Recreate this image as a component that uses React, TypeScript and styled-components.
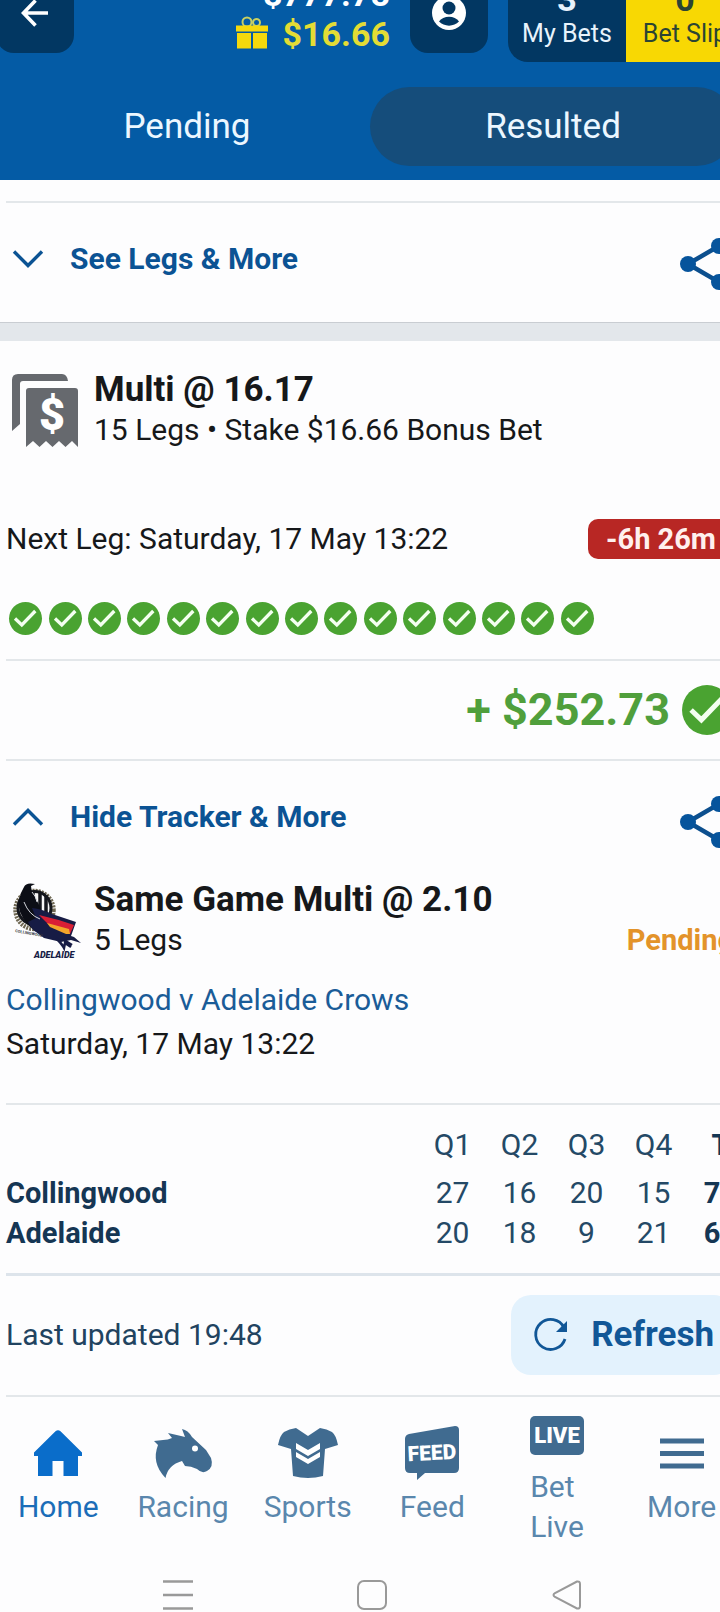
import React from "react";
import styled, { createGlobalStyle, css } from "styled-components";

const GlobalStyle = createGlobalStyle`
  *, *::before, *::after { box-sizing: border-box; }
  html, body { margin: 0; background: #fdfdfe; }
  body {
    font-family: Roboto, "Liberation Sans", sans-serif;
    font-size: 30px;
    line-height: 40px;
    color: #16181a;
  }
  h2, p, ul { margin: 0; padding: 0; }
  ul { list-style: none; }
  a { color: inherit; text-decoration: none; }
  button { font: inherit; color: inherit; border: 0; padding: 0; background: none; cursor: pointer; }
  svg { display: block; flex: none; overflow: visible; }
`;

/* The page is wider and taller than the window, so the edges are cut off. */
const Viewport = styled.div`
  overflow: hidden;
`;

const Page = styled.div`
  margin: -36px -24px 0 -4px;
`;

const Header = styled.header`
  background: #045ba5;
  color: #fff;
  padding-bottom: 14px;
`;

const TopBar = styled.div`
  display: flex;
  align-items: center;
  height: 98px;
`;

const SquareButton = styled.button`
  display: flex;
  align-items: center;
  justify-content: center;
  width: 78px;
  height: 80px;
  border-radius: 18px;
  background: #023762;
`;

const Balance = styled.div`
  flex: 1;
  display: flex;
  flex-direction: column;
  align-items: flex-end;
  padding: 2px 20px 0 0;
  font-size: 34px;
  font-weight: 700;
`;

const BonusBalance = styled.span`
  display: flex;
  align-items: center;
  gap: 14px;
  color: #e3dc35;
`;

const BetCounters = styled.div`
  display: flex;
  align-self: stretch;
  width: 236px;
  margin-left: 20px;
  border-radius: 20px;
  overflow: hidden;
`;

const Counter = styled.button<{ $slip?: boolean }>`
  flex: 1;
  display: flex;
  flex-direction: column;
  align-items: center;
  justify-content: flex-end;
  padding-bottom: 8px;
  font-size: 25px;
  line-height: 40px;
  white-space: nowrap;
  background: ${(p) => (p.$slip ? "#f8d803" : "#023762")};
  color: ${(p) => (p.$slip ? "#2b4434" : "#e8f3fc")};
  strong {
    line-height: 30px;
    font-size: 34px;
    font-weight: 700;
  }
`;

const Tabs = styled.div`
  display: flex;
  padding: 0 8px;
  margin-top: 25px;
`;

const Tab = styled.button<{ $active?: boolean }>`
  flex: 1;
  height: 79px;
  border-radius: 40px;
  font-size: 35px;
  color: #ecf7ff;
  background: ${(p) => (p.$active ? "#154d7b" : "transparent")};
`;

const Divider = styled.hr<{ $thick?: boolean }>`
  height: ${(p) => (p.$thick ? 3 : 2)}px;
  margin: 0;
  border: 0;
  background: ${(p) => (p.$thick ? "#dde4eb" : "#e3e7ea")};
`;

const PreviousBet = styled.section`
  padding: 21px 10px 0;
`;

const BetCard = styled.section`
  padding: 29px 10px 0;
`;

const Gap = styled.div`
  height: 19px;
  background: #e3e7eb;
  border-top: 1px solid #c9cdd2;
`;

const ExpandRow = styled.div`
  display: flex;
  justify-content: space-between;
  align-items: flex-start;
  height: 119px;
  padding: 35px 2px 0 7px;
`;

const ExpandButton = styled.button`
  display: flex;
  align-items: center;
  gap: 27px;
  height: 42px;
  font-weight: 700;
  color: #0b5394;
`;

const CardHead = styled.div`
  display: flex;
  align-items: flex-end;
  height: 80px;
  svg { align-self: flex-start; margin: 2px 14px 0 6px; }
`;

const CardTitles = styled.div`
  flex: 1;
`;

const Title = styled.h2`
  font-size: 35px;
  line-height: 40px;
  font-weight: 700;
`;

const Status = styled.span`
  font-size: 29px;
  font-weight: 700;
  color: #e3932a;
`;

const NextLeg = styled.div`
  display: flex;
  justify-content: space-between;
  margin-top: 69px;
`;

const Countdown = styled.span`
  padding: 0 18px;
  border-radius: 10px;
  background: #b82724;
  color: #fff0ee;
  font-size: 29px;
  font-weight: 700;
`;

const LegTicks = styled.ul`
  display: grid;
  grid-template-columns: repeat(15, 1fr);
  justify-items: center;
  max-width: 591px;
  margin: 43px 0 24px;
`;

const Returns = styled.div`
  display: flex;
  align-items: center;
  justify-content: flex-end;
  gap: 12px;
  height: 98px;
  padding-right: 2px;
  font-size: 45px;
  font-weight: 700;
  color: #509f3c;
`;

const MatchInfo = styled.div`
  margin: 18px 0 37px;
  line-height: 44px;
  a { color: #1a5c98; }
`;

const ScoreTable = styled.table`
  width: calc(100% + 20px);
  table-layout: fixed;
  border-collapse: collapse;
  margin: 20px 0;
  color: #244966;
  th, td { padding: 0; width: 67px; text-align: center; font-weight: 400; }
  thead th { padding-bottom: 8px; }
  th:first-child, td:first-child { width: auto; text-align: left; }
  tbody th, th:last-child, td:last-child { font-size: 29px; font-weight: 700; color: #153654; }
`;

const UpdatedRow = styled.div`
  display: flex;
  align-items: center;
  justify-content: space-between;
  padding: 19px 0 20px;
  color: #214360;
`;

const RefreshButton = styled.button`
  display: flex;
  align-items: center;
  gap: 22px;
  height: 80px;
  padding: 0 20px 0 22px;
  border-radius: 20px;
  background: #e3f2fd;
  color: #115797;
  font-size: 35px;
  font-weight: 700;
`;

const BottomNav = styled.nav`
  display: grid;
  grid-template-columns: repeat(6, 1fr);
  height: 162px;
`;

const NavItem = styled.a<{ $active?: boolean }>`
  display: flex;
  flex-direction: column;
  align-items: center;
  justify-content: center;
  gap: 10px;
  color: #5a87ad;
  ${(p) => p.$active && css`color: #1b6db8;`}
  span { width: min-content; }
`;

const SystemBar = styled.div`
  display: flex;
  justify-content: space-around;
  padding: 21px 80px 2px 85px;
`;

const BackIcon = () => (
  <svg width="28" height="28" viewBox="0 0 28 28" fill="none" stroke="#fff" strokeWidth="3.6">
    <path d="M27 14H3M14.500 1.500 2.500 14l12 12.500" />
  </svg>
);

const UserIcon = () => (
  <svg width="34" height="34" viewBox="0 0 34 34">
    <circle cx="17" cy="17" r="17" fill="#fff" />
    <circle cx="17" cy="12" r="6.500" fill="#023762" />
    <path d="M7 25.500c4-6.500 16-6.500 20 0-5 5.500-15 5.500-20 0z" fill="#023762" />
  </svg>
);

const GiftIcon = () => (
  <svg width="34" height="34" viewBox="0 0 34 34">
    <g fill="none" stroke="#c9d060" strokeWidth="2">
      <circle cx="12" cy="5" r="4.500" />
      <circle cx="21.500" cy="5.500" r="3.500" />
    </g>
    <path d="M1 8.500h32v6H1zM2 16h14v15.500H2zM18 16h14v15.500H18z" fill="#f5d90c" />
  </svg>
);

const Chevron = ({ up }: { up?: boolean }) => (
  <svg width="30" height="18" viewBox="0 0 30 18" fill="none" stroke="#0b5394" strokeWidth="3.400">
    <path d={up ? "M1 16.500 15 2.500l14 14" : "M1 1.500l14 14 14-14"} />
  </svg>
);

const ShareIcon = () => (
  <svg width="52" height="52" viewBox="0 0 52 52" fill="#06549c">
    <path d="M8 26 39 8M8 26l31 18" stroke="#0c4f8e" strokeWidth="4.500" />
    <circle cx="8" cy="26" r="8" />
    <circle cx="39" cy="8" r="8" />
    <circle cx="39" cy="44" r="8" />
  </svg>
);

const Tick = ({ size }: { size: number }) => (
  <svg width={size} height={size} viewBox="0 0 33 33" role="img" aria-label="Won">
    <circle cx="16.500" cy="16.500" r="16.500" fill="#4aa331" />
    <path d="M6 16.500l6.800 6.500L26.300 9" fill="none" stroke="#f4fff0" strokeWidth="3.300" />
  </svg>
);

const MultiIcon = () => (
  <svg width="68" height="76" viewBox="0 0 68 76" fill="#66696e">
    <path d="M0 59V8q0-6 6-6h44q5 0 6 7H11q-3 0-3 3v40z" />
    <path d="M14 75V19q0-3 3-3h46q3 0 3 3v56l-6-6-6.500 6-6.500-6-6.500 6-6.500-6-6.500 6-6.500-6z" />
    <text x="40" y="58" textAnchor="middle" fontFamily="Roboto" fontSize="45" fontWeight="900" fill="#fff">$</text>
  </svg>
);

const TeamLogo = () => (
  <svg width="68" height="78" viewBox="0 0 68 78">
    <circle cx="22.500" cy="28" r="19" fill="#fff" stroke="#6f6853" strokeWidth="4.500" strokeDasharray="2 1" />
    <circle cx="22.500" cy="26" r="16.500" fill="#f7f7f7" stroke="#14161c" strokeWidth="3" />
    <path d="M21 10v32M28 10v30M34 13v22" stroke="#14161c" strokeWidth="3.500" />
    <path d="M12 5Q14 0 23 2l-4 2 1 7q5 6 9 17l-6 20Q14 44 8 30 4 18 12 5z" fill="#0c0e16" />
    <path d="M20 26Q30 27 40 32l24 8-5 14 3 1 7 6-10-3-10 2-17-4-8-6Q20 48 16 40l8-4z" fill="#171c45" />
    <path d="M27 33q18 4 35 10l-4 9-20-8z" fill="#d91f35" />
    <path d="M35 41l22 6 1 5-4 0-16-7z" fill="#f3a52a" />
    <path d="M12 20q5 13 16 17M20 10q4 4 5 10" fill="none" stroke="#d5d8de" strokeWidth="1" />
    <path d="M44 56q6 6 8 10l1-5 6 4M52 58l8 5" fill="none" stroke="#171c45" strokeWidth="2.500" />
    <text x="3" y="50" fontFamily="Roboto" fontSize="4" fontWeight="700" fill="#33333a" transform="rotate(10 3 50)">COLLINGWOOD</text>
    <text x="22" y="76" fontFamily="Roboto" fontSize="9" fontWeight="900" fontStyle="italic" fill="#171c45">ADELAIDE</text>
  </svg>
);

const RefreshIcon = () => (
  <svg width="36" height="36" viewBox="0 0 36 36" fill="none" stroke="#115797" strokeWidth="2.800">
    <path d="M31 10.500A15 15 0 1 0 32 22" />
    <path d="M34 4v11H23z" fill="#115797" stroke="none" />
  </svg>
);

const HomeIcon = () => (
  <svg width="50" height="48" viewBox="0 0 50 48" fill="#0a6dca">
    <path d="M22.500 2.200q2.500-2 5 0L49 23.500V27h-4v20H30.500V32h-11v15H5V27H1v-3.500z" />
  </svg>
);

const HorseIcon = () => (
  <svg width="60" height="48" viewBox="0 1 60 48" fill="#406b90">
    <path d="M12.500 50Q-2 35 5 17L1 13l9-1q5 0 9-2l-4-5 13 3 4 1-3-8q6 1 10 8l14 13 5 8q3 9-4 13-5 3-10-2-6-3-12-3l-3-5Q15 37 12.500 50z" />
    <circle cx="42" cy="20.500" r="3" fill="#fff" />
  </svg>
);

const ShirtIcon = () => (
  <svg width="60" height="48" viewBox="0 1 60 48" fill="#406b90">
    <path d="M18 0l12 8L42 0q7 1 12 4 4 3 6 13l-13 4-2 27q-15 4-30 0l-2-27-13-4Q2 7 6 4q5-3 12-4z" />
    <path d="M18 15l12 7 12-7v6l-12 7-12-7zM18 24l12 7 12-7v5l-12 7-12-7z" fill="#fff" />
  </svg>
);

const FeedIcon = () => (
  <svg width="54" height="48" viewBox="0 3 54 48" fill="#406b90">
    <path d="M0 13q0-4 4-5L50 0q4 0 4 4v38q0 5-5 5H20l-8 7v-7H5q-5 0-5-5z" />
    <text x="27" y="34" textAnchor="middle" fontFamily="Roboto" fontSize="21" fontWeight="900" fill="#fff" transform="rotate(-3 27 30)">FEED</text>
  </svg>
);

const LiveIcon = () => (
  <svg width="54" height="48" viewBox="0 0 54 48">
    <rect y="7" width="54" height="39" rx="5" fill="#406b90" />
    <text x="27" y="34" textAnchor="middle" fontFamily="Roboto" fontSize="22" fontWeight="900" fill="#fff">LIVE</text>
  </svg>
);

const MenuIcon = () => (
  <svg width="44" height="48" viewBox="0 0 44 48" stroke="#406b90" strokeWidth="5">
    <path d="M0 12h44M0 24.500h44M0 37h44" />
  </svg>
);

const navItems = [
  { label: "Home", Icon: HomeIcon, active: true },
  { label: "Racing", Icon: HorseIcon },
  { label: "Sports", Icon: ShirtIcon },
  { label: "Feed", Icon: FeedIcon },
  { label: "Bet Live", Icon: LiveIcon },
  { label: "More", Icon: MenuIcon },
];

const scores = [
  { team: "Collingwood", quarters: [27, 16, 20, 15], total: 78 },
  { team: "Adelaide", quarters: [20, 18, 9, 21], total: 68 },
];

function Expander({ label, open }: { label: string; open?: boolean }) {
  return (
    <ExpandRow>
      <ExpandButton aria-expanded={!!open}>
        <Chevron up={open} />
        {label}
      </ExpandButton>
      <button aria-label="Share">
        <ShareIcon />
      </button>
    </ExpandRow>
  );
}

export default function App() {
  return (
    <Viewport>
      <GlobalStyle />
      <Page>
        <Header>
          <TopBar>
            <SquareButton aria-label="Back"><BackIcon /></SquareButton>
            <Balance>
              <span>$777.78</span>
              <BonusBalance><GiftIcon />$16.66</BonusBalance>
            </Balance>
            <SquareButton aria-label="Account"><UserIcon /></SquareButton>
            <BetCounters>
              <Counter><strong>3</strong>My Bets</Counter>
              <Counter $slip><strong>0</strong>Bet Slip</Counter>
            </BetCounters>
          </TopBar>
          <Tabs role="tablist">
            <Tab role="tab" aria-selected={false}>Pending</Tab>
            <Tab role="tab" aria-selected $active>Resulted</Tab>
          </Tabs>
        </Header>

        <main>
          <PreviousBet>
            <Divider />
            <Expander label="See Legs &amp; More" />
          </PreviousBet>
          <Gap />
          <BetCard>
            <CardHead>
              <MultiIcon />
              <CardTitles>
                <Title>Multi @ 16.17</Title>
                <p>15 Legs • Stake $16.66 Bonus Bet</p>
              </CardTitles>
            </CardHead>
            <NextLeg>
              <span>Next Leg: Saturday, 17 May 13:22</span>
              <Countdown>-6h 26m</Countdown>
            </NextLeg>
            <LegTicks>
              {Array.from({ length: 15 }, (_, i) => (
                <li key={i}><Tick size={33} /></li>
              ))}
            </LegTicks>
            <Divider />
            <Returns>
              + $252.73
              <Tick size={50} />
            </Returns>
            <Divider />
            <Expander label="Hide Tracker &amp; More" open />
            <CardHead>
              <TeamLogo />
              <CardTitles>
                <Title>Same Game Multi @ 2.10</Title>
                <p>5 Legs</p>
              </CardTitles>
              <Status>Pending</Status>
            </CardHead>
            <MatchInfo>
              <a href="#match">Collingwood v Adelaide Crows</a>
              <p>Saturday, 17 May 13:22</p>
            </MatchInfo>
            <Divider />
            <ScoreTable>
              <thead>
                <tr>
                  <td />
                  {["Q1", "Q2", "Q3", "Q4", "T"].map((q) => (
                    <th key={q} scope="col">{q}</th>
                  ))}
                </tr>
              </thead>
              <tbody>
                {scores.map((s) => (
                  <tr key={s.team}>
                    <th scope="row">{s.team}</th>
                    {s.quarters.map((n, i) => <td key={i}>{n}</td>)}
                    <td>{s.total}</td>
                  </tr>
                ))}
              </tbody>
            </ScoreTable>
            <Divider $thick />
            <UpdatedRow>
              <span>Last updated 19:48</span>
              <RefreshButton><RefreshIcon />Refresh</RefreshButton>
            </UpdatedRow>
            <Divider />
          </BetCard>
        </main>

        <BottomNav>
          {navItems.map(({ label, Icon, active }) => (
            <NavItem key={label} href={"#" + label.toLowerCase().replace(" ", "-")} $active={active}>
              <Icon />
              <span>{label}</span>
            </NavItem>
          ))}
        </BottomNav>

        <SystemBar>
          <button aria-label="Recent apps">
            <svg width="30" height="30" viewBox="0 0 30 30" stroke="#999" strokeWidth="2.500">
              <path d="M0 1.500h30M0 15h30M0 28.500h30" />
            </svg>
          </button>
          <button aria-label="Home screen">
            <svg width="30" height="30" viewBox="0 0 30 30" fill="none" stroke="#999" strokeWidth="2">
              <rect x="1" y="1" width="28" height="28" rx="6" />
            </svg>
          </button>
          <button aria-label="Go back">
            <svg width="30" height="30" viewBox="0 0 30 30" fill="none" stroke="#999" strokeWidth="2">
              <path d="M25 1.500 3 13q-3 2 0 4l22 11.500q3 .5 3-2.500V4q0-3-3-2.500z" />
            </svg>
          </button>
        </SystemBar>
      </Page>
    </Viewport>
  );
}
